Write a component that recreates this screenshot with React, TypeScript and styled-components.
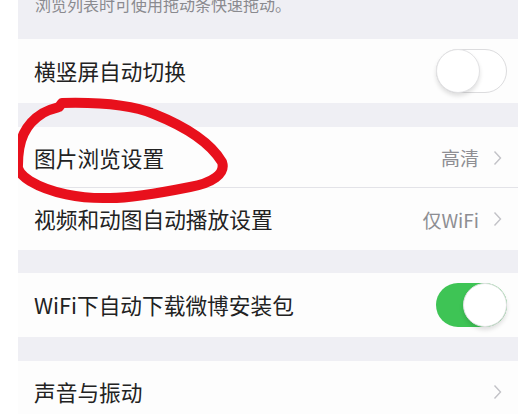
import React from "react";
import styled, { createGlobalStyle } from "styled-components";

const colors = {
  page: "#ffffff",
  groupBg: "#efeff4",
  cell: "#fdfdfd",
  text: "#222222",
  sub: "#8e8e93",
  hint: "#8a8a8f",
  chevron: "#c2c2c7",
  line: "#e3e3e8",
  green: "#3ec455",
  mark: "#e8101c",
};

const GlobalStyle = createGlobalStyle`
  html, body {
    margin: 0;
    padding: 0;
    background: ${colors.page};
    font-family: "Noto Sans CJK SC", "Noto Sans", sans-serif;
  }
`;

function App() {
  return (
    <>
      <GlobalStyle />
      <StyledPage>
        <StyledScreen>
          <StyledHint>
            <p>浏览列表时可使用拖动条快速拖动。</p>
          </StyledHint>

          <StyledRow $height={64}>
            <StyledLabel>横竖屏自动切换</StyledLabel>
            <Switch on={false} />
          </StyledRow>

          <StyledGap $height={24} />

          <StyledRow $height={61} $divider>
            <StyledLabel>图片浏览设置</StyledLabel>
            <StyledDetail>
              <span>高清</span>
              <Chevron />
            </StyledDetail>
          </StyledRow>
          <StyledRow $height={62}>
            <StyledLabel>视频和动图自动播放设置</StyledLabel>
            <StyledDetail>
              <span>仅WiFi</span>
              <Chevron />
            </StyledDetail>
          </StyledRow>

          <StyledGap $height={23} />

          <StyledRow $height={64}>
            <StyledLabel>WiFi下自动下载微博安装包</StyledLabel>
            <Switch on />
          </StyledRow>

          <StyledGap $height={24} />

          <StyledRow $height={62}>
            <StyledLabel>声音与振动</StyledLabel>
            <StyledDetail>
              <Chevron />
            </StyledDetail>
          </StyledRow>

          <StyledMark viewBox="18 0 500 414" aria-hidden>
            <path
              d="M 18 165 C 18 140, 25 124, 43 113 C 50 109, 55 108, 59 107 L 62 103 C 100 102, 132 105, 154 114 C 184 126, 210 142, 222 162 C 226 174, 212 183, 190 187 C 160 193, 130 198, 110 198 C 80 199, 50 193, 30 181 C 22 176, 17 170, 18 165 Z"
              fill="none"
              stroke={colors.mark}
              strokeWidth={10}
              strokeLinejoin="round"
              strokeLinecap="round"
            />
          </StyledMark>
        </StyledScreen>
      </StyledPage>
    </>
  );
}

function Switch({ on }: { on: boolean }) {
  return (
    <StyledSwitch $on={on}>
      <span />
    </StyledSwitch>
  );
}

function Chevron() {
  return (
    <svg width="9" height="16" viewBox="0 0 9 16">
      <path
        d="M1.5 1.5 L7.5 8 L1.5 14.5"
        fill="none"
        stroke={colors.chevron}
        strokeWidth={1.4}
      />
    </svg>
  );
}

const StyledPage = styled.div`
  width: 532px;
  height: 414px;
  overflow: hidden;
  padding: 0 14px 0 18px;
  box-sizing: border-box;
`;

const StyledScreen = styled.div`
  position: relative;
  width: 500px;
  height: 414px;
  overflow: hidden;
  background: ${colors.groupBg};
`;

const StyledHint = styled.div`
  height: 39px;
  overflow: hidden;
  padding-left: 17px;
  & > p {
    margin: -7px 0 0;
    font-size: 16px;
    line-height: 22px;
    color: ${colors.hint};
    white-space: nowrap;
  }
`;

const StyledGap = styled.div<{ $height: number }>`
  height: ${(p) => p.$height}px;
`;

const StyledRow = styled.div<{ $height: number; $divider?: boolean }>`
  position: relative;
  height: ${(p) => p.$height}px;
  display: flex;
  align-items: center;
  justify-content: space-between;
  padding: 0 11px 0 16px;
  background: ${colors.cell};
  ${(p) =>
    p.$divider &&
    `
    &::after {
      content: "";
      position: absolute;
      left: 16px;
      right: 0;
      bottom: 0;
      height: 1px;
      background: ${colors.line};
    }
  `}
`;

const StyledLabel = styled.span`
  font-size: 21.7px;
  line-height: 30px;
  color: ${colors.text};
  white-space: nowrap;
`;

const StyledDetail = styled.div`
  display: flex;
  align-items: center;
  gap: 14px;
  padding-right: 5px;
  font-size: 19px;
  color: ${colors.sub};
  & > svg {
    display: block;
  }
`;

const StyledSwitch = styled.div<{ $on: boolean }>`
  position: relative;
  width: 71px;
  height: 44px;
  border-radius: 22px;
  box-sizing: border-box;
  background: ${(p) => (p.$on ? colors.green : "#ffffff")};
  border: ${(p) => (p.$on ? "none" : "1.5px solid #dcdcde")};
  & > span {
    position: absolute;
    top: ${(p) => (p.$on ? 0 : -1.5)}px;
    ${(p) => (p.$on ? "right: 0;" : "left: -1.5px;")}
    width: 44px;
    height: 44px;
    border-radius: 50%;
    background: #ffffff;
    box-sizing: border-box;
    border: 1px solid #e2e2e4;
    box-shadow: 0 3px 4px rgba(0, 0, 0, 0.12);
  }
`;

const StyledMark = styled.svg`
  position: absolute;
  left: 0;
  top: 0;
  width: 500px;
  height: 414px;
  pointer-events: none;
`;

export default App;
